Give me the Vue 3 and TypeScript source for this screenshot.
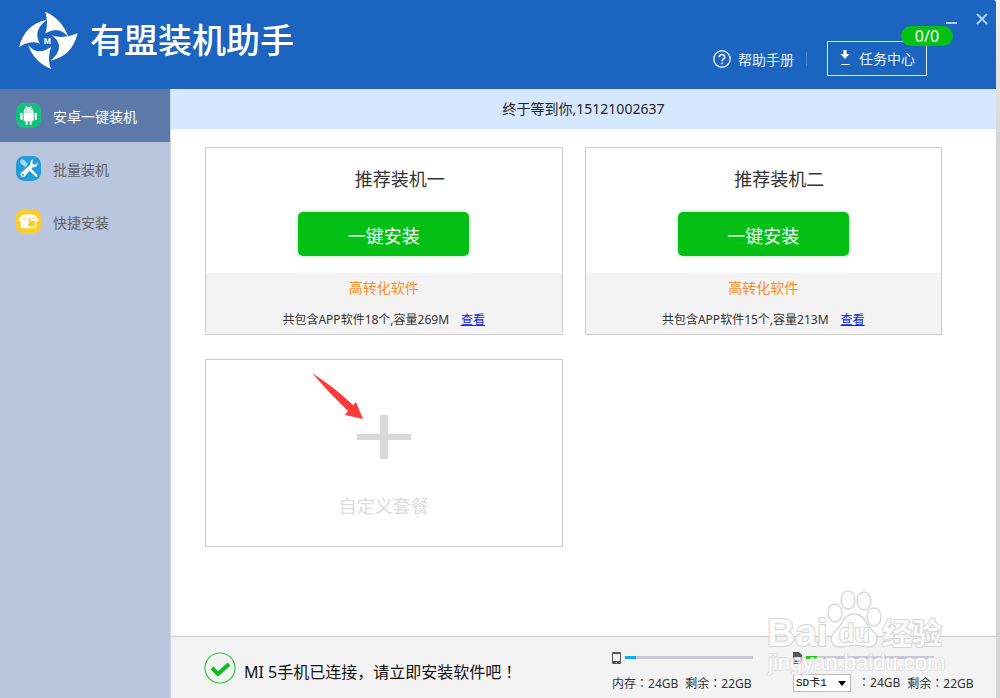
<script setup lang="ts">
import { ref } from 'vue'

interface Pack {
  title: string
  summary: string
}

const active = ref(0)
const card = ref('SD卡1')
const menu: string[] = ['安卓一键装机', '批量装机', '快捷安装']
const packs: Pack[] = [
  { title: '推荐装机一', summary: '共包含APP软件18个,容量269M' },
  { title: '推荐装机二', summary: '共包含APP软件15个,容量213M' },
]
</script>

<template>
  <div class="app">
    <header class="top">
      <div class="brand">
        <svg class="logo" viewBox="0 0 225 210" fill="#fff" aria-hidden="true">
          <path d="M106 20Q156 42 175 96Q146 60 106 86Q116 52 106 20Z" />
          <path d="M203 85Q186 154 121 167Q156 140 144 112Q138 98 123 91Q162 103 203 85Z" />
          <path d="M123 192Q70 170 54 118Q64 136 84 139Q108 140 124 124Q110 162 123 192Z" />
          <path d="M27 127Q44 58 110 45Q66 78 90 116Q60 104 27 127Z" />
          <text x="112" y="117" text-anchor="middle" class="logo-letter">M</text>
        </svg>
        <h1>有盟装机助手</h1>
      </div>
      <div class="tools">
        <div class="win-buttons">
          <button type="button" aria-label="最小化">
            <svg width="12" height="12" viewBox="0 0 12 12"><path d="M0 10H11" stroke="#a9d0fa" stroke-width="2" /></svg>
          </button>
          <button type="button" aria-label="关闭">
            <svg width="12" height="12" viewBox="0 0 12 12"><path d="M1 1L11 11M11 1L1 11" stroke="#a9d0fa" stroke-width="2" /></svg>
          </button>
        </div>
        <nav class="links">
          <a href="#" class="help">
            <svg width="18" height="18" viewBox="0 0 18 18" fill="none" stroke="#e6f1fd" stroke-width="1.4">
              <circle cx="9" cy="9" r="8.2" />
              <path d="M6.3 7.2C6.3 3.6 11.7 3.7 11.7 6.9C11.7 8.8 9.1 8.8 9.1 11.2M9.1 12.5V14.2" stroke-width="1.6" />
            </svg>
            帮助手册
          </a>
          <i class="divider"></i>
          <button type="button" class="task">
            <svg width="10" height="18" viewBox="0 0 10 18" fill="#fff">
              <path d="M3.5 1H6.5V5H9.5L5 10L0.5 5H3.5ZM1 15H10V16H1Z" />
            </svg>
            任务中心
            <span class="badge">0/0</span>
          </button>
        </nav>
      </div>
    </header>

    <div class="body">
      <nav class="side">
        <button
          v-for="(label, i) in menu"
          :key="label"
          type="button"
          :class="{ on: i === active }"
          @click="active = i"
        >
          <svg v-if="i === 0" width="25" height="25" viewBox="0 0 75 75">
            <rect width="75" height="75" rx="25" fill="#14c17c" />
            <g fill="#fff">
              <path d="M23 26Q24 16 31 14L28 10L30 9L34 13Q38 12 42 13L46 9L48 10L45 14Q52 17 53 26Z" />
              <path d="M23 28H53V53Q53 55 50 55H47V64Q44 68 41 64V55H35V64Q32 68 29 64V55H26Q23 55 23 53Z" />
              <rect x="13" y="29" width="7" height="22" rx="3.5" />
              <rect x="56" y="29" width="7" height="22" rx="3.5" />
            </g>
            <circle cx="31" cy="20" r="2" fill="#14c17c" />
            <circle cx="45" cy="20" r="2" fill="#14c17c" />
          </svg>
          <svg v-else-if="i === 1" width="25" height="25" viewBox="0 0 75 75">
            <rect width="75" height="75" rx="25" fill="#229dd8" />
            <path d="M12 16Q14 9 22 10L36 24L28 34L13 22Z" fill="#a4d8f0" />
            <path d="M36 40L43 35L63 56Q66 62 61 64Z" fill="#fff" />
            <path d="M52 10Q42 12 43 26L15 50Q11 57 17 62Q23 66 28 59L50 34Q64 34 65 20L57 26L50 24L49 17Z" fill="#fff" />
            <circle cx="21" cy="56" r="3" fill="#229dd8" />
          </svg>
          <svg v-else width="25" height="25" viewBox="0 0 75 75">
            <rect width="75" height="75" rx="25" fill="#fdcb2b" />
            <path d="M19 18Q37 13 56 18L69 32L61 38V53Q59 58 50 58H24Q14 58 14 52V38L7 33Z" fill="#fff" />
            <path d="M15 30Q28 26 38 31Q47 26 60 30" stroke="#fdcb2b" stroke-width="2" fill="none" />
            <path d="M39 29Q43 26 44 36H57V50Q55 53 49 53H41L35 47L39 39Z" fill="#fdcb2b" />
          </svg>
          <span>{{ label }}</span>
        </button>
      </nav>

      <main class="main">
        <p class="notice">终于等到你,15121002637</p>
        <div class="grid">
          <section v-for="p in packs" :key="p.title" class="card">
            <h2>{{ p.title }}</h2>
            <button type="button" class="install">一键安装</button>
            <div class="info">
              <p class="kind">高转化软件</p>
              <p class="sum">{{ p.summary }}<a href="#">查看</a></p>
            </div>
          </section>
          <button type="button" class="card custom">
            <svg class="plus" width="54" height="44" viewBox="0 0 54 44" fill="#d9d9d9">
              <path d="M23 0H31V19H54V25H31V44H23V25H0V19H23Z" />
            </svg>
            <span>自定义套餐</span>
            <svg class="arrow" width="51" height="47" viewBox="0 0 51 47" fill="#fd3b3b">
              <path d="M0 0Q22 14 41 32L44 29L51 46L33 42L36 38Q17 20 0 0Z" />
            </svg>
          </button>
        </div>

        <footer class="status">
          <svg class="check" width="32" height="32" viewBox="0 0 32 32" fill="none">
            <circle cx="16" cy="16" r="15" stroke="#2fc740" stroke-width="1.2" />
            <path d="M8 16L14 22L25 12" stroke="#0bbf1a" stroke-width="4" />
          </svg>
          <p class="msg">MI 5手机已连接，请立即安装软件吧<span class="mid">！</span></p>
          <div class="store phone">
            <div class="meter">
              <svg width="9" height="12" viewBox="0 0 9 12">
                <path fill-rule="evenodd" d="M1 0H8Q9 0 9 1V11Q9 12 8 12H1Q0 12 0 11V1Q0 0 1 0ZM1 2V9H8V2ZM4 10V11H5V10Z" fill="#555" />
              </svg>
              <div class="track"><i></i></div>
            </div>
            <div class="nums">
              <span>内存<span class="mid">：</span>24GB</span><span>剩余<span class="mid">：</span>22GB</span>
            </div>
          </div>
          <div class="store sd">
            <div class="meter">
              <svg width="9" height="12" viewBox="0 0 9 12">
                <path fill-rule="evenodd" d="M0 0H6L9 3V8L8 9V12H0V9L1 8L0 7ZM2 5V8H7V5ZM1 10V11H7V10Z" fill="#555" />
              </svg>
              <div class="track green"><i></i></div>
            </div>
            <div class="nums">
              <label class="pick">
                <select v-model="card" aria-label="存储卡">
                  <option>SD卡1</option>
                </select>
              </label>
              <span><span class="mid">：</span>24GB</span><span>剩余<span class="mid">：</span>22GB</span>
            </div>
          </div>
        </footer>
      </main>
    </div>

    <svg class="mark" width="184" height="90" viewBox="0 0 184 90">
      <g fill="#fff" fill-opacity="0.8" stroke="#d8d8d8" stroke-width="1.5">
        <ellipse cx="67" cy="25" rx="7" ry="9" />
        <ellipse cx="80" cy="12" rx="7" ry="9" />
        <ellipse cx="96" cy="13" rx="7" ry="9" />
        <ellipse cx="106" cy="29" rx="7" ry="9" />
        <path d="M86 26C97 26 98 37 105 43C113 51 108 60 99 59Q86 56 74 59C63 60 60 50 67 43C75 37 75 26 86 26Z" />
        <text class="mark-latin" x="-1" y="58">Bai</text>
        <text class="mark-du" x="71" y="54">du</text>
        <text class="mark-han" x="114" y="56">经验</text>
      </g>
      <text class="mark-url" x="0" y="82">jingyan.baidu.com</text>
    </svg>
  </div>
</template>

<style>
html,
body {
  margin: 0;
}
</style>

<style scoped>
.app {
  position: relative;
  box-sizing: border-box;
  min-height: 100vh;
  display: flex;
  flex-direction: column;
  padding-right: 4px;
  background: linear-gradient(#f4f4f4, #d6d6d6 140px);
  font-family: 'Noto Sans', 'Noto Sans CJK SC', sans-serif;
  color: #333;
}
h1,
h2,
p {
  margin: 0;
  font-weight: 400;
}
button {
  font: inherit;
  color: inherit;
  background: none;
  border: 0;
  padding: 0;
  cursor: pointer;
}
svg {
  flex: none;
}
.top {
  display: flex;
  justify-content: space-between;
  background: #1b65c1;
  border-radius: 0 3px 0 0;
  color: #e6f1fd;
}
.brand {
  display: flex;
  padding: 5px 0 0 10px;
}
.logo {
  width: 75px;
  height: 70px;
}
.logo-letter {
  font: 700 26px 'Liberation Sans', sans-serif;
}
h1 {
  margin-left: 5px;
  font-size: 34px;
  line-height: 70px;
  font-weight: 500;
  color: #fff;
}
.tools {
  display: flex;
  flex-direction: column;
  align-items: flex-end;
  padding-bottom: 13px;
}
.win-buttons {
  display: flex;
  gap: 18px;
  height: 28px;
  padding: 13px 8px 0 0;
}
.win-buttons button {
  height: 12px;
  line-height: 0;
}
.links {
  display: flex;
  align-items: center;
  margin-right: 69px;
  font-size: 14px;
}
.help {
  display: flex;
  align-items: center;
  gap: 7px;
  color: inherit;
  text-decoration: none;
}
.divider {
  width: 1px;
  height: 14px;
  margin: 0 20px 0 12px;
  background: #4585d4;
}
.task {
  position: relative;
  box-sizing: border-box;
  display: flex;
  align-items: center;
  gap: 9px;
  height: 35px;
  padding: 0 11px 2px 12px;
  border: 1px solid #dceafb;
}
.badge {
  position: absolute;
  top: -16px;
  right: -27px;
  width: 52px;
  border-radius: 10px;
  background: #04bf14;
  color: #fff;
  font-size: 16px;
  line-height: 20px;
  text-align: center;
}
.body {
  flex: 1;
  display: flex;
}
.side {
  width: 170px;
  flex: none;
  background: #b9c6dd;
  border-right: 1px solid #cad5e8;
}
.side button {
  display: flex;
  align-items: center;
  gap: 12px;
  width: 100%;
  height: 53px;
  padding-left: 16px;
  font-size: 14px;
  color: #5f6066;
}
.side .on {
  background: #5c79aa;
  color: #fff;
}
.main {
  flex: 1;
  display: flex;
  flex-direction: column;
  background: #fff;
}
.notice {
  background: #d6e8ff;
  font-size: 14px;
  line-height: 40px;
  text-align: center;
  color: #222;
}
.grid {
  flex: 1;
  display: grid;
  grid-template-columns: 1fr 1fr;
  align-content: start;
  gap: 24px 22px;
  padding: 18px 54px 24px 34px;
}
.card {
  box-sizing: border-box;
  display: flex;
  flex-direction: column;
  align-items: center;
  min-height: 188px;
  border: 1px solid #ccc;
  background: #fff;
}
.card h2 {
  padding: 16px 0 18px 32px;
  font-size: 18px;
  line-height: 30px;
}
.install {
  width: 171px;
  height: 44px;
  margin-bottom: 17px;
  padding-top: 2px;
  border-radius: 5px;
  background: #04bf14;
  box-shadow: 0 0 4px #b5ecba;
  color: #fff;
  font-size: 18px;
}
.info {
  align-self: stretch;
  flex: 1;
  padding: 5px 0 4px;
  background: #f3f3f3;
  text-align: center;
}
.kind {
  margin-bottom: 12px;
  font-size: 14px;
  line-height: 20px;
  color: #ff8c1e;
}
.sum {
  font-size: 12px;
  line-height: 19px;
}
.sum a {
  margin-left: 12px;
  color: #0a22ff;
}
.custom {
  position: relative;
  padding-top: 55px;
  font-size: 18px;
  line-height: 30px;
  color: #dcdcdc;
}
.plus {
  margin-bottom: 32px;
}
.arrow {
  position: absolute;
  left: 106px;
  top: 13px;
}
.status {
  display: flex;
  align-items: center;
  height: 61px;
  padding: 0 23px 0 33px;
  border-top: 1px solid #ccc;
  background: #f3f3f3;
}
.msg {
  flex: 1;
  padding: 8px 0 0 8px;
  font-size: 16px;
  line-height: 24px;
  color: #111;
  white-space: nowrap;
}
.mid {
  font-family: 'Noto Sans CJK TC', sans-serif;
  line-height: 1;
}
.store {
  font-size: 12px;
  white-space: nowrap;
}
.phone {
  width: 141px;
  margin-right: 40px;
}
.sd {
  width: 180px;
}
.meter {
  display: flex;
  align-items: center;
  gap: 4px;
  padding-top: 8px;
}
.track {
  width: 128px;
  height: 3px;
  background: #c8c8d0;
}
.track i {
  display: block;
  width: 11px;
  height: 3px;
  background: #08adf7;
}
.green i {
  background: #21cd0a;
}
.nums {
  display: flex;
  align-items: center;
  gap: 7px;
  height: 18px;
  margin-top: 10px;
}
.pick {
  position: relative;
  display: flex;
}
.pick::after {
  content: '';
  position: absolute;
  right: 5px;
  top: 7px;
  border: 4px solid transparent;
  border-top: 5px solid #000;
  border-bottom: 0;
  pointer-events: none;
}
select {
  appearance: none;
  box-sizing: border-box;
  width: 58px;
  height: 18px;
  padding: 0 2px;
  border: 1px solid #bbb;
  border-radius: 0;
  background: #fff;
  color: #000;
  font: 11px 'Liberation Mono', 'Noto Sans CJK SC', monospace;
}
.mark {
  position: absolute;
  right: 48px;
  bottom: 20px;
  overflow: visible;
  pointer-events: none;
}
.mark text {
  paint-order: stroke;
  stroke: #d8d8d8;
  stroke-width: 2px;
  stroke-linejoin: round;
  fill: #fff;
}
.mark .mark-latin {
  font: 700 39px 'Liberation Sans', sans-serif;
}
.mark .mark-du {
  font: 700 25px 'Liberation Sans', sans-serif;
}
.mark .mark-han {
  font: 700 30px 'Noto Sans CJK SC', sans-serif;
}
.mark .mark-url {
  font: 22px 'Liberation Sans', sans-serif;
  stroke: #dcdcdc;
  opacity: 0.75;
}
</style>
